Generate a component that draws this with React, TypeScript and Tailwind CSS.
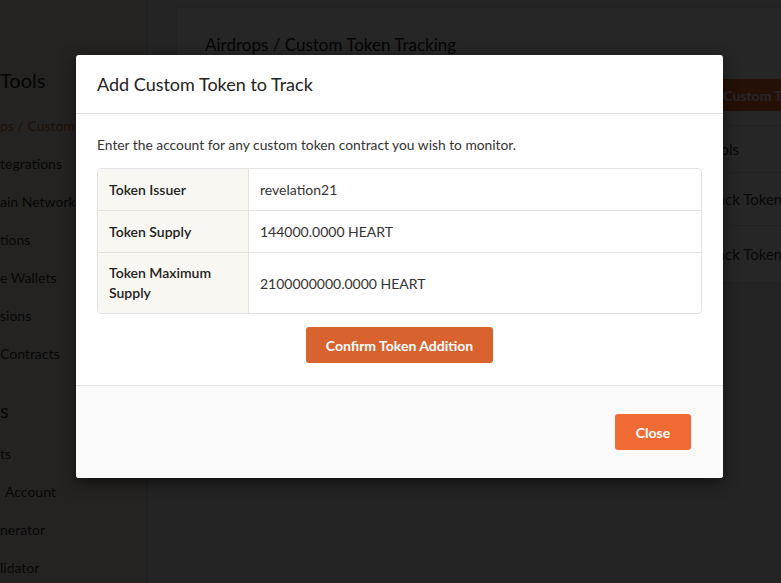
import React from 'react';

const sideTop = ['ps / Custom Tokens', 'tegrations', 'ain Networks', 'tions', 'e Wallets', 'sions', 'Contracts'];
const sideBottom = ['ts', 'Account', 'nerator', 'lidator'];

const rows = [
  { label: 'Token Issuer', value: 'revelation21', h: 'h-[42px]' },
  { label: 'Token Supply', value: '144000.0000 HEART', h: 'h-[42px]' },
  { label: 'Token Maximum Supply', value: '2100000000.0000 HEART', h: 'h-[60px]' },
];

export default function App() {
  return (
    <div className="relative h-[583px] w-[781px] overflow-hidden bg-[#f1f0ee] font-['Lato','Noto_Sans',sans-serif]">
      {/* Page behind the dialog */}
      <div className="flex h-full">
        {/* Sidebar (scrolled partly off the left edge) */}
        <aside className="w-[148px] shrink-0 overflow-hidden border-r border-[#d4d0ca] bg-[#f0ebe4] pt-[61px] text-[14px] text-[#333]">
          <div className="mb-[7px] flex h-[38px] items-center text-[20px] text-[#222]">Tools</div>
          {sideTop.map((item, i) => (
            <div
              key={item}
              className={`flex h-[38px] items-center whitespace-nowrap ${i === 0 ? 'text-[#e2632a]' : ''}`}
            >
              {item}
            </div>
          ))}
          <div className="mt-[19px] mb-[5px] flex h-[38px] items-center text-[20px] text-[#222]">s</div>
          {sideBottom.map((item) => (
            <div key={item} className={`flex h-[38px] items-center whitespace-nowrap ${item === 'Account' ? 'pl-[5px]' : ''}`}>
              {item}
            </div>
          ))}
        </aside>

        <main className="flex-1 pl-[28px] pt-[7px]">
          <div className="w-[700px] border border-[#e2e2e2] bg-white px-[28px] pt-[25px]">
            <h2 className="text-[17px] leading-6 text-[#222]">Airdrops / Custom Token Tracking</h2>
            <div className="mt-[22px] flex justify-end">
              <button className="h-[32px] w-[188px] rounded-[3px] bg-[#f06b33] text-[14px] font-bold text-white">
                Add Custom Token
              </button>
            </div>
            <div className="mt-[14px] text-[15px] text-[#333]">
              <div className="grid h-[47px] grid-cols-[1fr_150px] items-center border-t border-[#e5e5e5]">
                <span />
                <span className="pl-[8px]">Tools</span>
              </div>
              <div className="grid h-[53px] grid-cols-[1fr_150px] items-center border-t border-[#e5e5e5]">
                <span />
                <span className="pl-[8px]">Track Token</span>
              </div>
              <div className="grid h-[58px] grid-cols-[1fr_150px] items-center border-y border-[#e5e5e5]">
                <span />
                <span className="pl-[8px]">Track Token</span>
              </div>
            </div>
          </div>
        </main>
      </div>

      {/* Backdrop */}
      <div className="absolute inset-0 bg-black/85" />

      {/* Dialog */}
      <div className="absolute left-[76px] top-[55px] w-[647px] overflow-hidden rounded-[3px] bg-white shadow-[0_5px_15px_rgba(0,0,0,0.5)]">
        <div className="flex h-[59px] items-center border-b border-[#e5e5e5] px-[21px]">
          <h4 className="text-[18px] text-[#222]">Add Custom Token to Track</h4>
        </div>

        <div className="px-[21px] pt-[22px] pb-[22px]">
          <p className="text-[13.8px] leading-[18px] text-[#333]">
            Enter the account for any custom token contract you wish to monitor.
          </p>

          <div className="mt-[14px] overflow-hidden rounded-[4px] border border-[#e3e3e3]">
            {rows.map((row, i) => (
              <div
                key={row.label}
                className={`flex ${row.h} ${i < rows.length - 1 ? 'border-b border-[#e3e3e3]' : ''}`}
              >
                <div className="flex w-[151px] shrink-0 items-center border-r border-[#e3e3e3] bg-[#f9f7f1] px-[11px] text-[14px] leading-5 font-semibold text-[#222]">
                  {row.label}
                </div>
                <div className="flex items-center px-[11px] text-[14px] text-[#333]">{row.value}</div>
              </div>
            ))}
          </div>

          <div className="mt-[13px] flex justify-center">
            <button className="h-[36px] w-[187px] rounded-[3px] bg-[#d9632e] text-[14px] font-bold text-white">
              Confirm Token Addition
            </button>
          </div>
        </div>

        <div className="flex justify-end border-t border-[#e5e5e5] bg-[#fafafa] px-[32px] py-[28px]">
          <button className="h-[36px] w-[76px] rounded-[3px] bg-[#f06b33] text-[14px] font-bold text-white">
            Close
          </button>
        </div>
      </div>
    </div>
  );
}
